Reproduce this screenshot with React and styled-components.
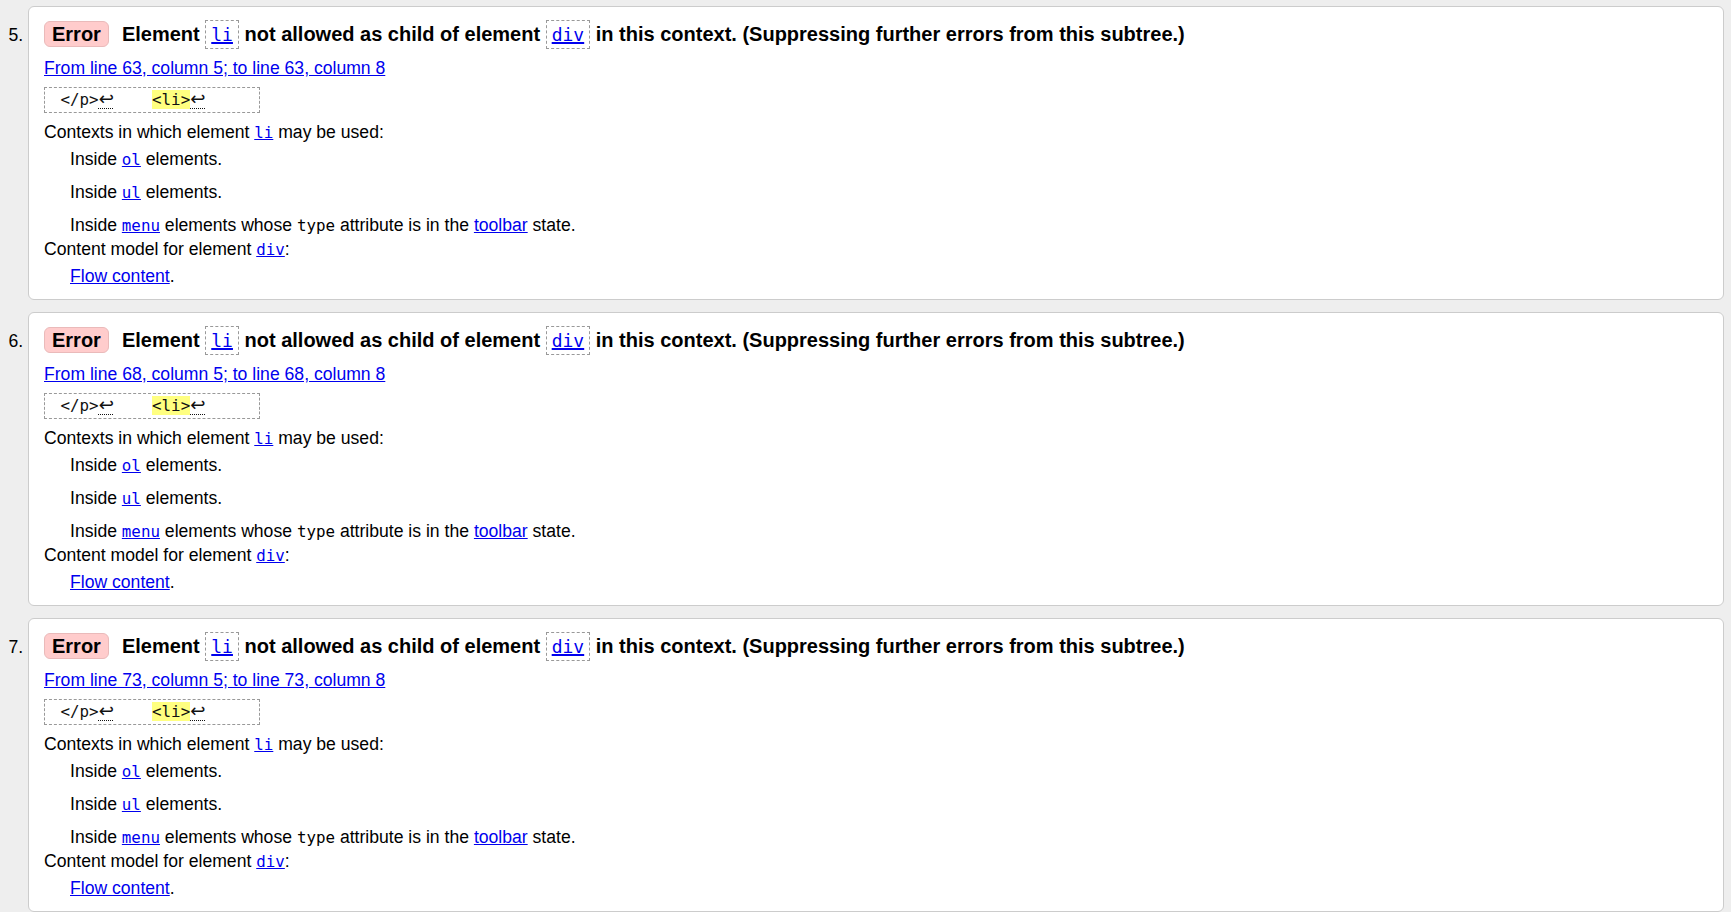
import React from 'react';
import styled, { createGlobalStyle } from 'styled-components';

const GlobalStyle = createGlobalStyle`
  html, body {
    margin: 0;
    padding: 0;
    background-color: #eeeeee;
  }
  body {
    font-family: "Liberation Sans", Arial, Helvetica, sans-serif;
    font-size: 17.6px;
    color: #000;
  }
`;

const messages = [
  { number: 5, line: 63 },
  { number: 6, line: 68 },
  { number: 7, line: 73 },
];

function Lf() {
  return <LineBreak title="Line break">↩</LineBreak>;
}

function Message(props) {
  const { line } = props;
  return (
    <MessageItem>
      <Heading>
        <Badge>Error</Badge>
        Element <Boxed><Link href="#li"><Code>li</Code></Link></Boxed> not allowed as child of element{' '}
        <Boxed><Link href="#div"><Code>div</Code></Link></Boxed> in this context. (Suppressing further errors from this subtree.)
      </Heading>
      <Location>
        <Link href={`#l${line}c8`}>
          {`From line ${line}, column 5; to line ${line}, column 8`}
        </Link>
      </Location>
      <Extract>
        {' </p>'}<Lf />{'    '}<Highlight>{'<li>'}</Highlight><Lf />{'     '}
      </Extract>
      <Definitions>
        <Term>
          Contexts in which element <Link href="#li"><Code>li</Code></Link> may be used:
        </Term>
        <Detail>Inside <Link href="#ol"><Code>ol</Code></Link> elements.</Detail>
        <Detail>Inside <Link href="#ul"><Code>ul</Code></Link> elements.</Detail>
        <Detail>
          Inside <Link href="#menu"><Code>menu</Code></Link> elements whose <Code>type</Code> attribute is in the{' '}
          <Link href="#toolbar">toolbar</Link> state.
        </Detail>
        <Term>
          Content model for element <Link href="#div"><Code>div</Code></Link>:
        </Term>
        <Detail><Link href="#flow">Flow content</Link>.</Detail>
      </Definitions>
    </MessageItem>
  );
}

function App() {
  return (
    <>
      <GlobalStyle />
      <ResultList start={5}>
        {messages.map(m => (
          <Message key={m.number} line={m.line} />
        ))}
      </ResultList>
    </>
  );
}

const ResultList = styled.ol`
  margin: 6px 7px 0 0;
  padding: 0 0 0 28px;
  list-style: decimal outside;
`;

const MessageItem = styled.li`
  background-color: #fff;
  border: 1px solid #cccccc;
  border-radius: 6px;
  padding: 12px 16px 11px 15px;
  margin-bottom: 12px;
  line-height: 24px;

  &::marker {
    font-size: 17.6px;
  }
`;

const Heading = styled.p`
  margin: 0;
  font-size: 20px;
  font-weight: bold;
  line-height: 30px;
`;

const Badge = styled.strong`
  display: inline-block;
  background-color: #ffcccc;
  border: 1px solid #eababa;
  border-radius: 6px;
  padding: 0 7px;
  line-height: 24px;
  margin-right: 13px;
`;

const Boxed = styled.span`
  display: inline-block;
  border: 1px dashed #999;
  padding: 0 5px;
  line-height: 27px;
`;

const Link = styled.a`
  color: #0000ee;
  text-decoration: underline;
`;

const Code = styled.code`
  font-family: "DejaVu Sans Mono", "Liberation Mono", monospace;
  font-size: 0.9em;
  font-weight: normal;
  line-height: 1;
`;

const Location = styled.p`
  margin: 7px 0 0;
`;

const Extract = styled.p`
  width: fit-content;
  margin: 7px 0 0;
  border: 1px dashed #999;
  padding: 0 6px;
  font-family: "DejaVu Sans Mono", "Liberation Mono", monospace;
  font-size: 15.84px;
  line-height: 24px;
  white-space: pre;
  color: #111;
`;

const LineBreak = styled.abbr`
  font-family: "DejaVu Sans", sans-serif;
  font-size: 1.15em;
  line-height: 1;
  text-decoration: underline dotted 1px;
  text-underline-offset: 3px;
`;

const Highlight = styled.b`
  background-color: #ffff80;
  font-weight: normal;
`;

const Definitions = styled.dl`
  margin: 7px 0 0;
`;

const Term = styled.dt`
  margin: 0;
`;

const Detail = styled.dd`
  margin: 0 0 0 26px;

  dt + & {
    margin-top: 3px;
  }

  & + & {
    margin-top: 9px;
  }
`;

export default App;
